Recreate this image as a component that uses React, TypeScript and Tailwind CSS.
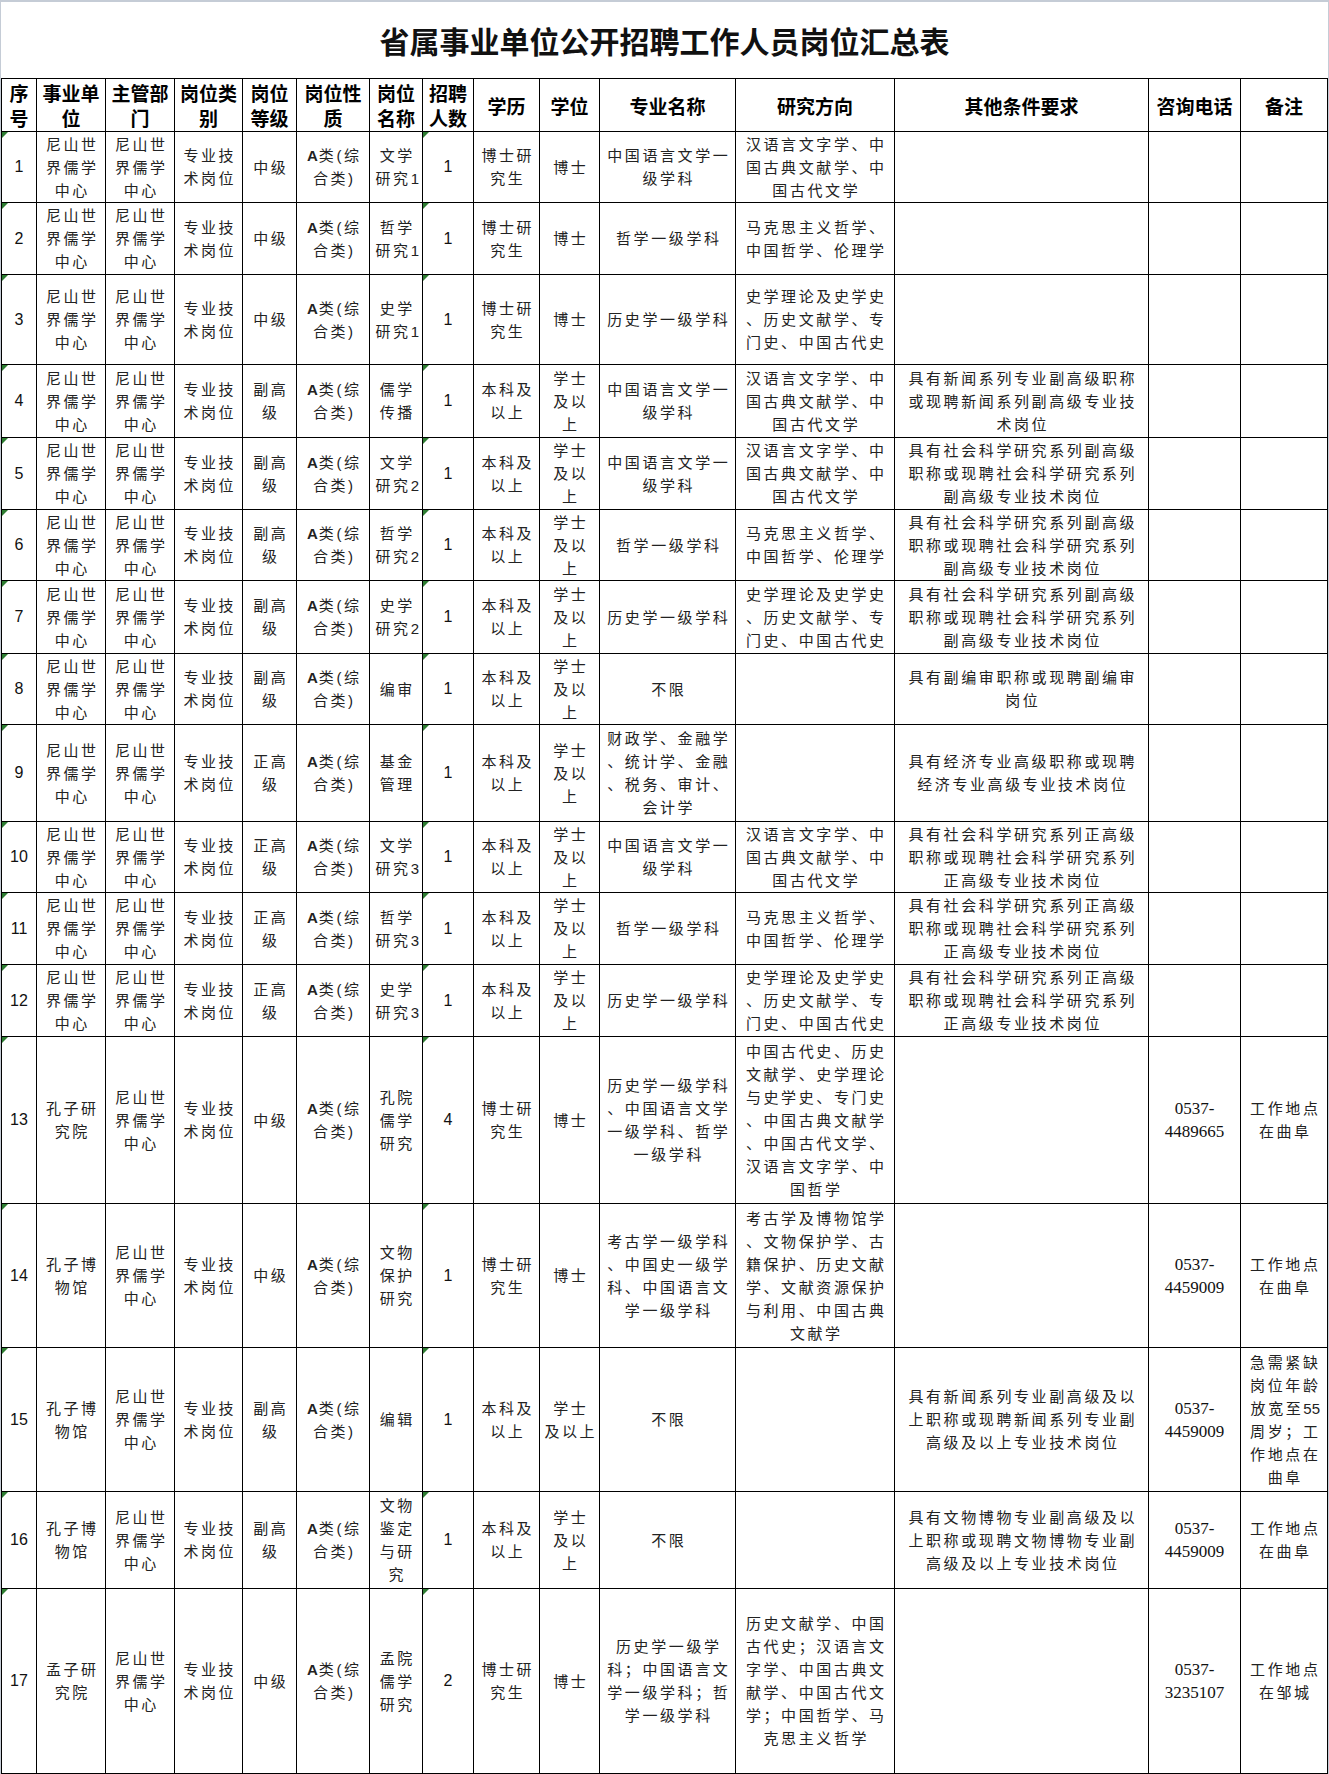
import React from 'react';

const UNIT = '尼山世|界儒学|中心';
const POST = '专业技|术岗位';
const KIND = 'A类(综|合类)';
const LANG = '中国语言文学一|级学科';
const LANG_DIR = '汉语言文字学、中|国古典文献学、中|国古代文学';
const PHIL_DIR = '马克思主义哲学、|中国哲学、伦理学';
const HIST_DIR = '史学理论及史学史|、历史文献学、专|门史、中国古代史';
const SOC_VICE = '具有社会科学研究系列副高级|职称或现聘社会科学研究系列|副高级专业技术岗位';
const SOC_FULL = '具有社会科学研究系列正高级|职称或现聘社会科学研究系列|正高级专业技术岗位';
const BK = '本科及|以上';
const XS = '学士|及以|上';
const BS = '博士研|究生';

const headers = [
    '序|号', '事业单|位', '主管部|门', '岗位类|别', '岗位|等级', '岗位性|质', '岗位|名称', '招聘|人数',
    '学历', '学位', '专业名称', '研究方向', '其他条件要求', '咨询电话', '备注',
];

// 序号, 事业单位, 主管部门, 岗位类别, 岗位等级, 岗位性质, 岗位名称, 人数, 学历, 学位, 专业, 方向, 其他, 电话, 备注
const rows: string[][] = [
    ['1', UNIT, UNIT, POST, '中级', KIND, '文学|研究1', '1', BS, '博士', LANG, LANG_DIR, '', '', ''],
    ['2', UNIT, UNIT, POST, '中级', KIND, '哲学|研究1', '1', BS, '博士', '哲学一级学科', PHIL_DIR, '', '', ''],
    ['3', UNIT, UNIT, POST, '中级', KIND, '史学|研究1', '1', BS, '博士', '历史学一级学科', HIST_DIR, '', '', ''],
    ['4', UNIT, UNIT, POST, '副高|级', KIND, '儒学|传播', '1', BK, XS, LANG, LANG_DIR, '具有新闻系列专业副高级职称|或现聘新闻系列副高级专业技|术岗位', '', ''],
    ['5', UNIT, UNIT, POST, '副高|级', KIND, '文学|研究2', '1', BK, XS, LANG, LANG_DIR, SOC_VICE, '', ''],
    ['6', UNIT, UNIT, POST, '副高|级', KIND, '哲学|研究2', '1', BK, XS, '哲学一级学科', PHIL_DIR, SOC_VICE, '', ''],
    ['7', UNIT, UNIT, POST, '副高|级', KIND, '史学|研究2', '1', BK, XS, '历史学一级学科', HIST_DIR, SOC_VICE, '', ''],
    ['8', UNIT, UNIT, POST, '副高|级', KIND, '编审', '1', BK, XS, '不限', '', '具有副编审职称或现聘副编审|岗位', '', ''],
    ['9', UNIT, UNIT, POST, '正高|级', KIND, '基金|管理', '1', BK, XS, '财政学、金融学|、统计学、金融|、税务、审计、|会计学', '', '具有经济专业高级职称或现聘|经济专业高级专业技术岗位', '', ''],
    ['10', UNIT, UNIT, POST, '正高|级', KIND, '文学|研究3', '1', BK, XS, LANG, LANG_DIR, SOC_FULL, '', ''],
    ['11', UNIT, UNIT, POST, '正高|级', KIND, '哲学|研究3', '1', BK, XS, '哲学一级学科', PHIL_DIR, SOC_FULL, '', ''],
    ['12', UNIT, UNIT, POST, '正高|级', KIND, '史学|研究3', '1', BK, XS, '历史学一级学科', HIST_DIR, SOC_FULL, '', ''],
    ['13', '孔子研|究院', UNIT, POST, '中级', KIND, '孔院|儒学|研究', '4', BS, '博士',
        '历史学一级学科|、中国语言文学|一级学科、哲学|一级学科',
        '中国古代史、历史|文献学、史学理论|与史学史、专门史|、中国古典文献学|、中国古代文学、|汉语言文字学、中|国哲学',
        '', '0537-|4489665', '工作地点|在曲阜'],
    ['14', '孔子博|物馆', UNIT, POST, '中级', KIND, '文物|保护|研究', '1', BS, '博士',
        '考古学一级学科|、中国史一级学|科、中国语言文|学一级学科',
        '考古学及博物馆学|、文物保护学、古|籍保护、历史文献|学、文献资源保护|与利用、中国古典|文献学',
        '', '0537-|4459009', '工作地点|在曲阜'],
    ['15', '孔子博|物馆', UNIT, POST, '副高|级', KIND, '编辑', '1', BK, '学士|及以上', '不限', '',
        '具有新闻系列专业副高级及以|上职称或现聘新闻系列专业副|高级及以上专业技术岗位',
        '0537-|4459009', '急需紧缺|岗位年龄|放宽至55|周岁；工|作地点在|曲阜'],
    ['16', '孔子博|物馆', UNIT, POST, '副高|级', KIND, '文物|鉴定|与研|究', '1', BK, XS, '不限', '',
        '具有文物博物专业副高级及以|上职称或现聘文物博物专业副|高级及以上专业技术岗位',
        '0537-|4459009', '工作地点|在曲阜'],
    ['17', '孟子研|究院', UNIT, POST, '中级', KIND, '孟院|儒学|研究', '2', BS, '博士',
        '历史学一级学|科；中国语言文|学一级学科；哲|学一级学科',
        '历史文献学、中国|古代史；汉语言文|字学、中国古典文|献学、中国古代文|学；中国哲学、马|克思主义哲学',
        '', '0537-|3235107', '工作地点|在邹城'],
];

// digits and the "A" are set tight and in sans, like the sheet does
const Line = ({ text }: { text: string }) => {
    const parts = text.split(/(\d+)/);
    return (
        <div className="whitespace-nowrap">
            {parts.map((p, i) => {
                if (!p) return null;
                if (/^\d+$/.test(p)) {
                    return <span key={i} className="tracking-normal text-[15px]">{p}</span>;
                }
                if (p.startsWith('A类')) {
                    return (
                        <span key={i}>
                            <span className="font-bold tracking-[1px]">A</span>
                            {p.slice(1)}
                        </span>
                    );
                }
                return <span key={i}>{p}</span>;
            })}
        </div>
    );
};

const Cell = ({ value, col }: { value: string; col: number }) => {
    const isNum = col === 0 || col === 7;
    const isPhone = col === 13;

    if (isNum) {
        return (
            <div className="relative bg-white flex items-center justify-center text-[16px] text-[#111] font-['Liberation_Sans',sans-serif]">
                <span className="absolute left-0 top-0 w-0 h-0 border-t-[6px] border-r-[6px] border-t-[#2e7d32] border-r-transparent" />
                {value}
            </div>
        );
    }

    if (isPhone) {
        return (
            <div className="bg-white flex flex-col items-center justify-center text-center text-[17px] leading-[23px] text-[#111] font-['Liberation_Serif',serif]">
                {value && value.split('|').map((l, i) => <div key={i}>{l}</div>)}
            </div>
        );
    }

    return (
        <div className="bg-white flex flex-col items-center justify-center text-center overflow-hidden text-[15px] leading-[23px] tracking-[2.6px] pl-[2.6px] text-[#222] font-['Liberation_Sans','Noto_Sans_CJK_SC',sans-serif]">
            {value && value.split('|').map((l, i) => <Line key={i} text={l} />)}
        </div>
    );
};

export default function App() {
    return (
        <div className="w-[1329px] bg-white border-t-2 border-x border-[#c5ccd6]">
            <div className="h-[76px] flex items-center justify-center">
                <h1 className="text-[30px] font-bold text-[#111] font-['Noto_Sans_CJK_SC',sans-serif]">
                    省属事业单位公开招聘工作人员岗位汇总表
                </h1>
            </div>

            <div className="grid bg-black p-px gap-px grid-cols-[34px_68px_68px_67px_53px_72px_52px_50px_65px_59px_135px_158px_253px_91px_86px] grid-rows-[52px_70px_71px_89px_72px_71px_70px_72px_70px_96px_70px_71px_71px_166px_143px_143px_96px_184px]">
                {headers.map((h, i) => (
                    <div
                        key={i}
                        className="bg-white flex flex-col items-center justify-center text-center text-[19px] leading-[25px] font-bold text-black font-['Noto_Sans_CJK_SC',sans-serif]"
                    >
                        {h.split('|').map((l, j) => (
                            <div key={j} className="whitespace-nowrap">{l}</div>
                        ))}
                    </div>
                ))}
                {rows.map((r, ri) =>
                    r.map((v, ci) => <Cell key={`${ri}-${ci}`} value={v} col={ci} />)
                )}
            </div>
        </div>
    );
}
